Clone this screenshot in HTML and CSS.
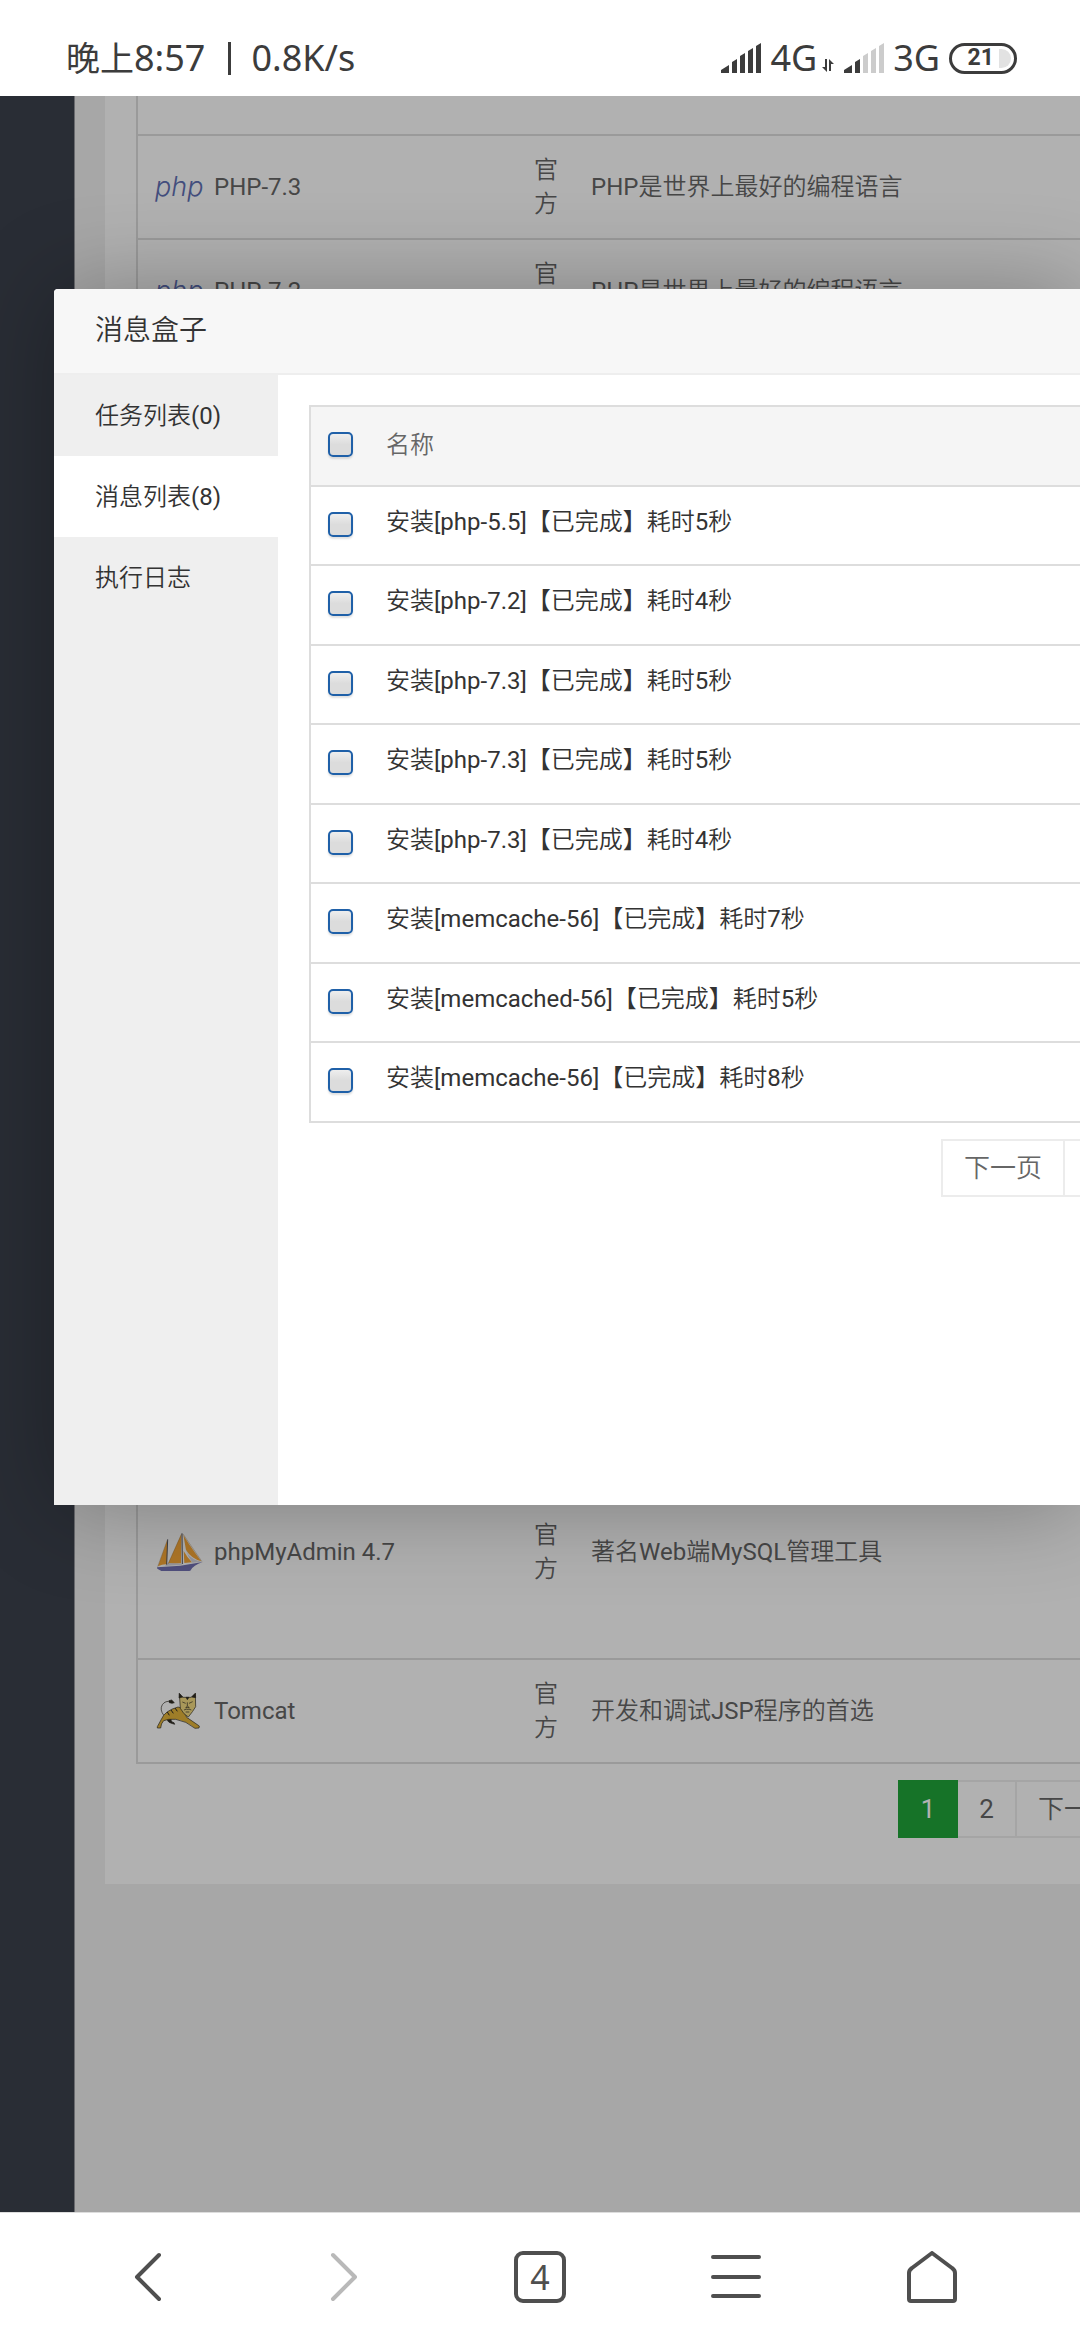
FILE: index.html
```html
<!DOCTYPE html>
<html lang="zh-CN">
<head>
<meta charset="utf-8">
<meta name="viewport" content="width=device-width">
<title>消息盒子</title>
<link rel="stylesheet" href="styles.css">
</head>
<body>
<header class="status">
  <div class="status-left"><span class="status-cjk">晚上</span>8:57<i class="status-bar"></i>0.8K/s</div>
  <div class="status-right">
    <svg class="signal" viewBox="0 0 40 30" aria-hidden="true"><path d="M0 30v-3l8-5v8zM11 30V19l5-3v14zM19 30V13l5-3v20zM27 30V8l5-3v25zM35 30V3l5-3v30z"/></svg>
    <span class="net">4G</span>
    <svg class="updown" viewBox="0 0 14 14" aria-hidden="true"><path d="M4 1h2v13L1 9h3zM8 13h2V6h3L8 1z"/></svg>
    <svg class="signal" viewBox="0 0 40 30" aria-hidden="true"><path d="M0 30v-3l8-5v8zM11 30V19l5-3v14z"/><path class="off" d="M19 30V13l5-3v20zM27 30V8l5-3v25zM35 30V3l5-3v30z"/></svg>
    <span class="net">3G</span>
    <span class="battery">21<i class="battery-rest"></i></span>
  </div>
</header>

<main class="page">
  <aside class="rail"></aside>
  <section class="content">
    <div class="panel">
      <table class="apps">
        <colgroup><col class="c-name"><col class="c-dev"><col></colgroup>
        <tbody>
          <tr class="cut"><td></td><td></td><td></td></tr>
          <tr>
            <td><div class="app"><span class="php">php</span>PHP-7.3</div></td>
            <td>官方</td><td>PHP是世界上最好的编程语言</td>
          </tr>
          <tr>
            <td><div class="app"><span class="php">php</span>PHP-7.2</div></td>
            <td>官方</td><td>PHP是世界上最好的编程语言</td>
          </tr>
          <tr class="covered"><td></td><td></td><td></td></tr>
          <tr class="tall">
            <td><div class="app">
              <svg class="logo" viewBox="45 36 144 132" aria-hidden="true">
                <path fill="#f9a938" d="M82 66 54 145q14-7 27-6zM124 48 84 138l39-2zM130 50q10 20 54 80-30-8-46-34zM131 99l2 36 23-2q-14-14-25-34z"/>
                <path fill="#d8d8e0" d="m137 92 8 18q14 16 40 21l-28 3q-14-18-20-42zM80 139l6-4 38 2 3 3-52 4z"/>
                <path fill="#7372b4" d="m51 148 70-5 67-11q-28 9-37 26l-4 1H64l-12-7z"/>
                <path fill="none" stroke="#55555f" stroke-width="3" d="M83 64 80 140M126 46l1 92"/>
                <path fill="none" stroke="#8d6a3c" stroke-width="1" d="m129 48 57 83M125 47 84 138M82 66 53 146"/>
              </svg>phpMyAdmin 4.7</div></td>
            <td>官方</td><td>著名Web端MySQL管理工具</td>
          </tr>
          <tr>
            <td><div class="app">
              <svg class="logo" viewBox="45 508 144 132" aria-hidden="true">
                <g stroke="#2e2a22" stroke-width="2" stroke-linejoin="round">
                  <path fill="none" d="M72 588q-14-18-5-33 9-13 26-9"/>
                  <path fill="#2e2a22" d="m87 543 8-2 8 8-7 2-8-2zM82 594q-2 12 10 16l12 4-2-5-6-2q-4-4-3-12z"/>
                  <path fill="#e2b33a" d="M52 625v-4l12-22q10-26 50-37l14 4 12 27 38 26-1 6-12 1q-26-22-58-27-24-2-36 4-8 8-9 22z"/>
                  <path fill="#f2da80" d="m118 522 10 11h26l12-12 1 40q-8 14-22 31-15-8-24-26z"/>
                  <path fill="#2e2a22" d="m118 521-1 14 11-3zM166 521l1 13-12-2zM138 533l4 7 5-7z"/>
                  <path fill="none" stroke-width="3" d="m82 577 6 10M93 571l7 10M105 565l7 10"/>
                  <path fill="none" d="m127 547 10 4M158 546l-11 5M142 548v12l-5 4h11l-5-4M132 571l8-3 3 3 3-3 8 3M137 577h11"/>
                </g>
              </svg>Tomcat</div></td>
            <td>官方</td><td>开发和调试JSP程序的首选</td>
          </tr>
        </tbody>
      </table>
      <nav class="pager pager-apps">
        <button class="pg on" type="button">1</button><button class="pg" type="button">2</button><button class="pg" type="button">下一页</button>
      </nav>
    </div>
  </section>

  <div class="shade">
    <section class="dialog" role="dialog" aria-labelledby="dlg-title">
      <h1 class="dialog-title" id="dlg-title">消息盒子</h1>
      <div class="dialog-body">
        <nav class="tabs">
          <button class="tab" type="button">任务列表(0)</button>
          <button class="tab active" type="button">消息列表(8)</button>
          <button class="tab" type="button">执行日志</button>
        </nav>
        <div class="pane">
          <table class="msgs">
            <colgroup><col class="c-check"><col></colgroup>
            <thead><tr><th><input type="checkbox" id="all"></th><th><label for="all">名称</label></th></tr></thead>
            <tbody>
              <tr><td><input type="checkbox" id="m1"></td><td><label for="m1">安装[php-5.5]【已完成】耗时5秒</label></td></tr>
              <tr><td><input type="checkbox" id="m2"></td><td><label for="m2">安装[php-7.2]【已完成】耗时4秒</label></td></tr>
              <tr><td><input type="checkbox" id="m3"></td><td><label for="m3">安装[php-7.3]【已完成】耗时5秒</label></td></tr>
              <tr><td><input type="checkbox" id="m4"></td><td><label for="m4">安装[php-7.3]【已完成】耗时5秒</label></td></tr>
              <tr><td><input type="checkbox" id="m5"></td><td><label for="m5">安装[php-7.3]【已完成】耗时4秒</label></td></tr>
              <tr><td><input type="checkbox" id="m6"></td><td><label for="m6">安装[memcache-56]【已完成】耗时7秒</label></td></tr>
              <tr><td><input type="checkbox" id="m7"></td><td><label for="m7">安装[memcached-56]【已完成】耗时5秒</label></td></tr>
              <tr><td><input type="checkbox" id="m8"></td><td><label for="m8">安装[memcache-56]【已完成】耗时8秒</label></td></tr>
            </tbody>
          </table>
          <nav class="pager pager-msgs">
            <button class="pg" type="button">下一页</button><span class="pg"></span>
          </nav>
        </div>
      </div>
    </section>
  </div>
</main>

<nav class="toolbar">
  <button class="tool" type="button" aria-label="后退"><svg viewBox="0 0 52 52"><path d="M37 4 15 26l22 22"/></svg></button>
  <button class="tool dim" type="button" aria-label="前进"><svg viewBox="0 0 52 52"><path d="m15 4 22 22-22 22"/></svg></button>
  <button class="tool" type="button"><span class="count">4</span></button>
  <button class="tool" type="button" aria-label="菜单"><svg viewBox="0 0 52 52"><path d="M3 6h46M3 26h46M3 45h46"/></svg></button>
  <button class="tool" type="button" aria-label="主页"><svg viewBox="0 0 52 52"><path d="M26 2 6 17q-3 2-3 5v26q0 2 2 2h42q2 0 2-2V22q0-3-3-5z"/></svg></button>
</nav>
</body>
</html>
```
FILE: styles.css
```css
* { box-sizing: border-box; }

body {
  margin: 0;
  height: 100vh;
  display: flex;
  flex-direction: column;
  overflow: hidden;
  background: #fff;
  color: #333;
  font: 24px/34px Roboto, "Noto Sans CJK SC DemiLight", "Noto Sans CJK SC", sans-serif;
}

button { margin: 0; padding: 0; border: 0; background: none; font: inherit; color: inherit; }

/* phone status bar */
.status {
  flex: none;
  height: 96px;
  padding: 20px 63px 0 66px;
  display: flex;
  align-items: center;
  justify-content: space-between;
  color: #3c3c3c;
  font: 36px/48px "Noto Sans", "Noto Sans CJK SC", sans-serif;
}
.status-left, .status-right { display: flex; align-items: center; }
.status-cjk { font-size: 34px; }
.status-bar { width: 3px; height: 33px; margin: 0 20px 0 23px; background: currentColor; }
.signal { width: 40px; height: 30px; margin-right: 9px; fill: #3c3c3c; }
.signal .off { fill: #ccc; }
.updown { width: 14px; height: 14px; margin: 14px 9px 0 4px; fill: #3c3c3c; }
.battery {
  width: 68px;
  height: 31px;
  margin-left: 9px;
  padding-right: 3px;
  display: flex;
  align-items: center;
  justify-content: flex-end;
  gap: 5px;
  border: 3px solid currentColor;
  border-radius: 16px;
  font: bold 23px/24px Roboto, sans-serif;
}
.battery-rest { width: 12px; height: 19px; background: #e2e2e2; border-radius: 0 10px 10px 0; }

/* page behind the dialog */
.page { flex: 1; min-height: 0; display: flex; position: relative; overflow: hidden; background: #f0f0f0; }
.rail { flex: none; width: 75px; background: #3c414d; border-right: 1px solid #989aa0; }
.content { flex: 1; min-width: 0; padding-left: 30px; }
.panel { padding: 0 0 46px 31px; background: #fefefe; }

table { width: 100%; border-collapse: separate; border-spacing: 0; table-layout: fixed; }
td, th { padding: 17px; border-bottom: 2px solid #ddd; text-align: left; font-weight: normal; }
td:first-child, th:first-child { border-left: 2px solid #ddd; }

.apps { color: #666; }
.apps td { height: 104px; }
.apps .cut td { height: 40px; padding: 0; }
.apps .covered td { height: 1102px; }
.apps .tall td { height: 214px; }
.c-name { width: 381px; }
.c-dev { width: 57px; }
.app { display: flex; align-items: center; }
.php { width: 59px; font: italic 300 27px/34px Inter, sans-serif; color: #6070b4; }
.logo { width: 48px; height: 44px; margin-right: 11px; }

.pager { display: flex; justify-content: flex-end; padding-top: 16px; }
.pg {
  height: 58px;
  margin-left: -2px;
  padding: 0 21px;
  border: 2px solid #ececec;
  color: #666;
  font-size: 26px;
  white-space: nowrap;
}
.pg.on { position: relative; background: #20a53a; border-color: #20a53a; color: #fff; }
.pager-apps { margin-right: -59px; }
.pager-msgs { margin-right: -29px; }

/* dialog */
.shade { position: absolute; inset: 0; background: rgba(0, 0, 0, 0.3); }
.dialog {
  position: absolute;
  top: 193px;
  left: 54px;
  right: 0;
  height: 1216px;
  display: flex;
  flex-direction: column;
  background: #fff;
  border-radius: 4px 0 0 0;
  box-shadow: 2px 2px 94px rgba(0, 0, 0, 0.3);
}
.dialog-title {
  flex: none;
  height: 86px;
  margin: 0;
  padding-left: 41px;
  background: #f7f7f7;
  border-bottom: 2px solid #eee;
  border-radius: 4px 0 0 0;
  font-size: 28px;
  font-weight: normal;
  line-height: 84px;
}
.dialog-body { flex: 1; display: flex; }
.tabs { flex: none; width: 224px; background: #efefef; }
.tab { display: block; width: 100%; height: 81px; padding-left: 41px; text-align: left; }
.tab.active { background: #fff; }
.pane { flex: 1; min-width: 0; padding: 30px 0 0 31px; }

.msgs { border-top: 2px solid #ddd; }
.msgs th { height: 80px; padding: 0 17px; background: #f5f5f5; color: #666; }
.msgs td { height: 79px; padding: 0 17px; }
.msgs tr:nth-child(even) td { height: 80px; }
.msgs label { display: block; padding-bottom: 2px; }
.msgs td label { padding-bottom: 8px; }
.c-check { width: 60px; }
.msgs input {
  appearance: none;
  display: block;
  width: 25px;
  height: 25px;
  margin: 0 0 3px;
  border: 2px solid #1f60a8;
  border-radius: 5px;
  background: linear-gradient(#eee, #dcdcdc 50%);
  box-shadow: 0 2px 2px rgba(0, 0, 0, 0.12);
}

/* browser toolbar */
.toolbar { flex: none; height: 128px; padding: 0 50px; display: flex; border-top: 1px solid #ddd; }
.tool { flex: 1; display: flex; align-items: center; justify-content: center; color: #4f4f4f; }
.tool svg { width: 52px; height: 52px; fill: none; stroke: currentColor; stroke-width: 4; stroke-linecap: round; stroke-linejoin: round; }
.tool.dim { color: #b9b9b9; }
.count { width: 52px; height: 52px; border: 4px solid currentColor; border-radius: 9px; font: 34px/44px "Noto Sans", sans-serif; }
```
